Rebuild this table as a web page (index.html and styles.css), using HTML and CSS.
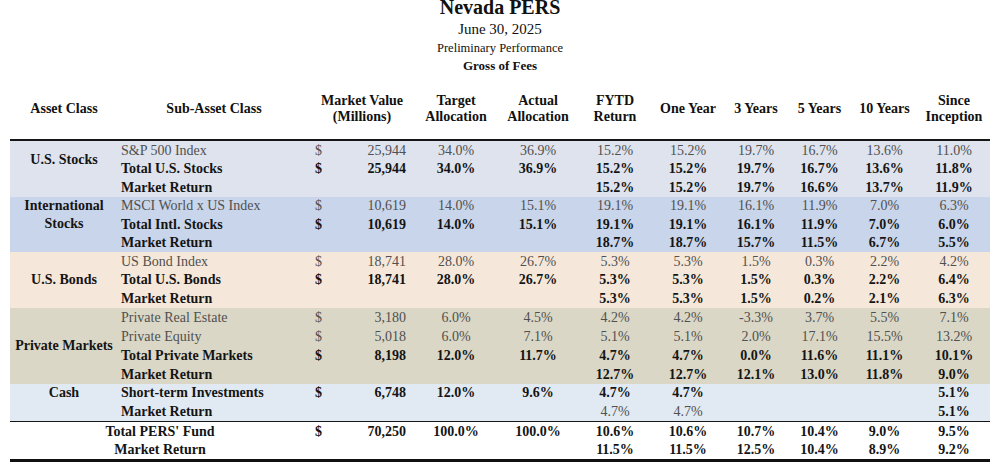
FILE: index.html
```html
<!DOCTYPE html>
<html>
<head>
<meta charset="utf-8">
<title>Nevada PERS</title>
<link rel="stylesheet" href="styles.css">
</head>
<body>
<header class="titles">
  <div class="t1">Nevada PERS</div>
  <div class="t2">June 30, 2025</div>
  <div class="t3">Preliminary Performance</div>
  <div class="t4">Gross of Fees</div>
</header>
<table class="perf">
  <colgroup>
    <col class="c-asset"><col class="c-sub"><col class="c-cur"><col class="c-mv"><col class="c-tgt"><col class="c-act"><col class="c-fytd"><col class="c-1y"><col class="c-3y"><col class="c-5y"><col class="c-10y"><col class="c-si">
  </colgroup>
  <thead>
    <tr>
      <th>Asset Class</th><th>Sub-Asset Class</th><th colspan="2">Market Value<br>(Millions)</th><th>Target<br>Allocation</th><th>Actual<br>Allocation</th><th>FYTD<br>Return</th><th>One Year</th><th>3 Years</th><th>5 Years</th><th>10 Years</th><th>Since<br>Inception</th>
    </tr>
  </thead>
  <tbody>
    <tr class="band-us">
      <th class="asset" rowspan="2">U.S. Stocks</th>
      <td class="sub">S&amp;P 500 Index</td><td class="cur">$</td><td class="mv">25,944</td><td>34.0%</td><td>36.9%</td><td>15.2%</td><td>15.2%</td><td>19.7%</td><td>16.7%</td><td>13.6%</td><td>11.0%</td>
    </tr>
    <tr class="band-us b">
      <td class="sub">Total U.S. Stocks</td><td class="cur">$</td><td class="mv">25,944</td><td>34.0%</td><td>36.9%</td><td>15.2%</td><td>15.2%</td><td>19.7%</td><td>16.7%</td><td>13.6%</td><td>11.8%</td>
    </tr>
    <tr class="band-us b">
      <th class="asset"></th><td class="sub">Market Return</td><td class="cur"></td><td class="mv"></td><td></td><td></td><td>15.2%</td><td>15.2%</td><td>19.7%</td><td>16.6%</td><td>13.7%</td><td>11.9%</td>
    </tr>

    <tr class="band-intl">
      <th class="asset" rowspan="2">International<br>Stocks</th>
      <td class="sub">MSCI World x US Index</td><td class="cur">$</td><td class="mv">10,619</td><td>14.0%</td><td>15.1%</td><td>19.1%</td><td>19.1%</td><td>16.1%</td><td>11.9%</td><td>7.0%</td><td>6.3%</td>
    </tr>
    <tr class="band-intl b">
      <td class="sub">Total Intl. Stocks</td><td class="cur">$</td><td class="mv">10,619</td><td>14.0%</td><td>15.1%</td><td>19.1%</td><td>19.1%</td><td>16.1%</td><td>11.9%</td><td>7.0%</td><td>6.0%</td>
    </tr>
    <tr class="band-intl b">
      <th class="asset"></th><td class="sub">Market Return</td><td class="cur"></td><td class="mv"></td><td></td><td></td><td>18.7%</td><td>18.7%</td><td>15.7%</td><td>11.5%</td><td>6.7%</td><td>5.5%</td>
    </tr>

    <tr class="band-bond">
      <th class="asset" rowspan="3">U.S. Bonds</th>
      <td class="sub">US Bond Index</td><td class="cur">$</td><td class="mv">18,741</td><td>28.0%</td><td>26.7%</td><td>5.3%</td><td>5.3%</td><td>1.5%</td><td>0.3%</td><td>2.2%</td><td>4.2%</td>
    </tr>
    <tr class="band-bond b">
      <td class="sub">Total U.S. Bonds</td><td class="cur">$</td><td class="mv">18,741</td><td>28.0%</td><td>26.7%</td><td>5.3%</td><td>5.3%</td><td>1.5%</td><td>0.3%</td><td>2.2%</td><td>6.4%</td>
    </tr>
    <tr class="band-bond b">
      <td class="sub">Market Return</td><td class="cur"></td><td class="mv"></td><td></td><td></td><td>5.3%</td><td>5.3%</td><td>1.5%</td><td>0.2%</td><td>2.1%</td><td>6.3%</td>
    </tr>

    <tr class="band-pm">
      <th class="asset" rowspan="4">Private Markets</th>
      <td class="sub">Private Real Estate</td><td class="cur">$</td><td class="mv">3,180</td><td>6.0%</td><td>4.5%</td><td>4.2%</td><td>4.2%</td><td>-3.3%</td><td>3.7%</td><td>5.5%</td><td>7.1%</td>
    </tr>
    <tr class="band-pm">
      <td class="sub">Private Equity</td><td class="cur">$</td><td class="mv">5,018</td><td>6.0%</td><td>7.1%</td><td>5.1%</td><td>5.1%</td><td>2.0%</td><td>17.1%</td><td>15.5%</td><td>13.2%</td>
    </tr>
    <tr class="band-pm b">
      <td class="sub">Total Private Markets</td><td class="cur">$</td><td class="mv">8,198</td><td>12.0%</td><td>11.7%</td><td>4.7%</td><td>4.7%</td><td>0.0%</td><td>11.6%</td><td>11.1%</td><td>10.1%</td>
    </tr>
    <tr class="band-pm b">
      <td class="sub">Market Return</td><td class="cur"></td><td class="mv"></td><td></td><td></td><td>12.7%</td><td>12.7%</td><td>12.1%</td><td>13.0%</td><td>11.8%</td><td>9.0%</td>
    </tr>

    <tr class="band-cash b">
      <th class="asset">Cash</th>
      <td class="sub">Short-term Investments</td><td class="cur">$</td><td class="mv">6,748</td><td>12.0%</td><td>9.6%</td><td>4.7%</td><td>4.7%</td><td></td><td></td><td></td><td>5.1%</td>
    </tr>
    <tr class="band-cash b">
      <th class="asset"></th><td class="sub">Market Return</td><td class="cur"></td><td class="mv"></td><td></td><td></td><td class="r">4.7%</td><td class="r">4.7%</td><td></td><td></td><td></td><td>5.1%</td>
    </tr>

    <tr class="total b">
      <td class="fund" colspan="2">Total PERS' Fund</td><td class="cur">$</td><td class="mv">70,250</td><td>100.0%</td><td>100.0%</td><td>10.6%</td><td>10.6%</td><td>10.7%</td><td>10.4%</td><td>9.0%</td><td>9.5%</td>
    </tr>
    <tr class="last b">
      <td class="fund" colspan="2">Market Return</td><td class="cur"></td><td class="mv"></td><td></td><td></td><td>11.5%</td><td>11.5%</td><td>12.5%</td><td>10.4%</td><td>8.9%</td><td>9.2%</td>
    </tr>
  </tbody>
</table>
</body>
</html>
```

FILE: styles.css
```css
html, body {
  margin: 0;
  padding: 0;
  background: #ffffff;
}

body {
  font-family: "Liberation Serif", "Times New Roman", serif;
  color: #111111;
  width: 1000px;
  height: 468px;
  overflow: hidden;
}

.titles {
  text-align: center;
  color: #111111;
}

.t1 {
  font-size: 20px;
  font-weight: bold;
  line-height: 22px;
  margin-top: -4px;
}

.t2 {
  font-size: 15px;
  line-height: 20px;
  margin-top: 1px;
}

.t3 {
  font-size: 12.5px;
  line-height: 18px;
}

.t4 {
  font-size: 13px;
  font-weight: bold;
  line-height: 18px;
}

.perf {
  margin-left: 10px;
  width: 980px;
  table-layout: fixed;
  border-collapse: separate;
  border-spacing: 0;
  font-size: 14px;
}

.c-asset { width: 108px; }
.c-sub { width: 192px; }
.c-cur { width: 20px; }
.c-mv { width: 84px; }
.c-tgt { width: 84px; }
.c-act { width: 80px; }
.c-fytd { width: 74px; }
.c-1y { width: 72px; }
.c-3y { width: 64px; }
.c-5y { width: 63px; }
.c-10y { width: 67px; }
.c-si { width: 72px; }

.perf thead th {
  font-weight: bold;
  line-height: 16.5px;
  height: 60px;
  padding: 4px 0 0 0;
  vertical-align: middle;
  text-align: center;
  color: #111111;
  border-bottom: 2px solid #161616;
  white-space: nowrap;
}

.perf tbody tr {
  height: 18.5px;
}

.perf tbody tr.band-pm {
  height: 19px;
}

.perf tbody td,
.perf tbody th {
  padding: 0;
  line-height: 15px;
  vertical-align: middle;
  text-align: center;
  white-space: nowrap;
  color: #505050;
  font-weight: normal;
}

.perf tbody th.asset {
  font-weight: bold;
  color: #141414;
  line-height: 18px;
}

.perf tbody td.sub {
  text-align: left;
  padding-left: 3px;
}

.perf tbody td.cur {
  text-align: left;
  padding-left: 5px;
}

.perf tbody td.mv {
  text-align: right;
  padding-right: 8px;
}

.perf tbody td.fund {
  text-align: center;
}

.perf tbody tr.b td {
  font-weight: bold;
  color: #141414;
}

.perf tbody tr.b td.r {
  font-weight: normal;
  color: #505050;
}

.band-us td, .band-us th { background: #dee3ee; }
.band-intl td, .band-intl th { background: #c9d5ea; }
.band-bond td, .band-bond th { background: #f5e8da; }
.band-pm td, .band-pm th { background: #dad7c6; }
.band-cash td, .band-cash th { background: #e1eaf3; }

.perf tbody tr.total {
  height: 20px;
}

.perf tbody tr.total td {
  border-top: 1.5px solid #161616;
}

.perf tbody tr.last {
  height: 21.5px;
}

.perf tbody tr.last td {
  border-bottom: 3px solid #111111;
}
```
